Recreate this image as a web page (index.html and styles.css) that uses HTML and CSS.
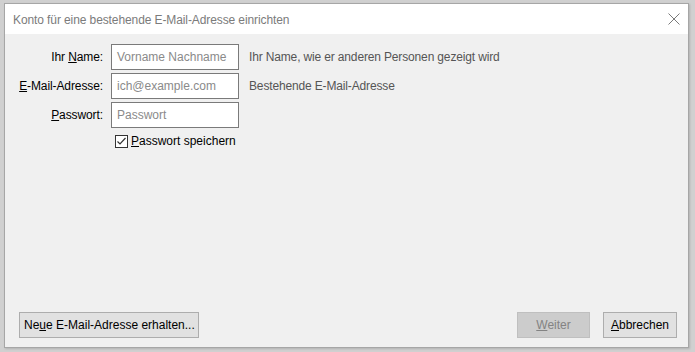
FILE: index.html
```html
<!DOCTYPE html>
<html lang="de">
<head>
<meta charset="utf-8">
<link rel="stylesheet" href="styles.css">
</head>
<body>
<div class="window">
  <div class="titlebar">
    <span class="title">Konto für eine bestehende E-Mail-Adresse einrichten</span>
    <svg class="close" width="12" height="12" viewBox="0 0 12 12"><path d="M0.5 0.5L11.5 11.5M11.5 0.5L0.5 11.5" stroke="#7a7a7a" stroke-width="1"/></svg>
  </div>
  <div class="content">
    <div class="form">
      <label class="lbl">Ihr <u>N</u>ame:</label>
      <div class="input">Vorname Nachname</div>
      <span class="hint">Ihr Name, wie er anderen Personen gezeigt wird</span>
      <label class="lbl"><u>E</u>-Mail-Adresse:</label>
      <div class="input">ich@example.com</div>
      <span class="hint">Bestehende E-Mail-Adresse</span>
      <label class="lbl"><u>P</u>asswort:</label>
      <div class="input">Passwort</div>
      <span class="hint"></span>
      <span></span>
      <div class="check">
        <svg class="box" width="13" height="13" viewBox="0 0 13 13"><rect x="0.5" y="0.5" width="12" height="12" fill="#fff" stroke="#333"/><path d="M2.5 6.5L5 9L10.5 3" fill="none" stroke="#333" stroke-width="1.2"/></svg>
        <span><u>P</u>asswort speichern</span>
      </div>
    </div>
    <div class="spacer"></div>
    <div class="buttons">
      <button class="btn new">Ne<u>u</u>e E-Mail-Adresse erhalten...</button>
      <div class="grow"></div>
      <button class="btn disabled"><u>W</u>eiter</button>
      <button class="btn cancel"><u>A</u>bbrechen</button>
    </div>
  </div>
</div>
</body>
</html>
```
FILE: styles.css
```css
html, body { margin: 0; padding: 0; }
body {
  background: #d0d0d0;
  width: 695px;
  height: 352px;
  overflow: hidden;
  font-family: "Liberation Sans", Arial, sans-serif;
  font-size: 12px;
  color: #000;
}
.window {
  margin: 3px 6px 0 4px;
  width: 683px;
  height: 343px;
  border: 1px solid #a6a6a6;
  background: #f0f0f0;
  display: flex;
  flex-direction: column;
  box-shadow: 1px 1px 2px rgba(0,0,0,0.15);
}
.titlebar {
  height: 30px;
  background: #fff;
  display: flex;
  align-items: center;
  padding: 0 8px 0 8px;
  flex: none;
}
.title { color: #7b7b7b; flex: 1; padding-top: 1px; white-space: nowrap; letter-spacing: -0.1px; }
.content {
  flex: 1;
  display: flex;
  flex-direction: column;
  padding: 10px 11px 9px 14px;
}
.form {
  display: grid;
  grid-template-columns: 84px 128px 1fr;
  column-gap: 8px;
  row-gap: 3px;
  align-items: center;
  white-space: nowrap;
}
.lbl { text-align: right; letter-spacing: -0.1px; }
.lbl, .hint { line-height: 26px; }
.hint { color: #555; margin-left: 2px; letter-spacing: -0.15px; }
.input {
  height: 24px;
  line-height: 24px;
  border: 1px solid #7a7a7a;
  background: #fff;
  color: #8a8a8a;
  padding: 0 5px;
  width: 116px;
}
.check {
  grid-column: 2 / 4;
  display: flex;
  align-items: center;
  gap: 3px;
  padding-left: 4px;
  margin-top: 3px;
}
.box { flex: none; }
.spacer { flex: 1; }
.buttons { display: flex; align-items: center; gap: 13px; margin-left: 0; }
.grow { flex: 1; }
.btn {
  font: inherit;
  height: 26px;
  border: 1px solid #adadad;
  background: #e1e1e1;
  color: #000;
  padding: 0 4px;
  white-space: nowrap;
}
.new { width: 180px; }
.disabled { width: 73px; background: #cccccc; border-color: #bfbfbf; color: #838383; }
.cancel { width: 74px; }
```
